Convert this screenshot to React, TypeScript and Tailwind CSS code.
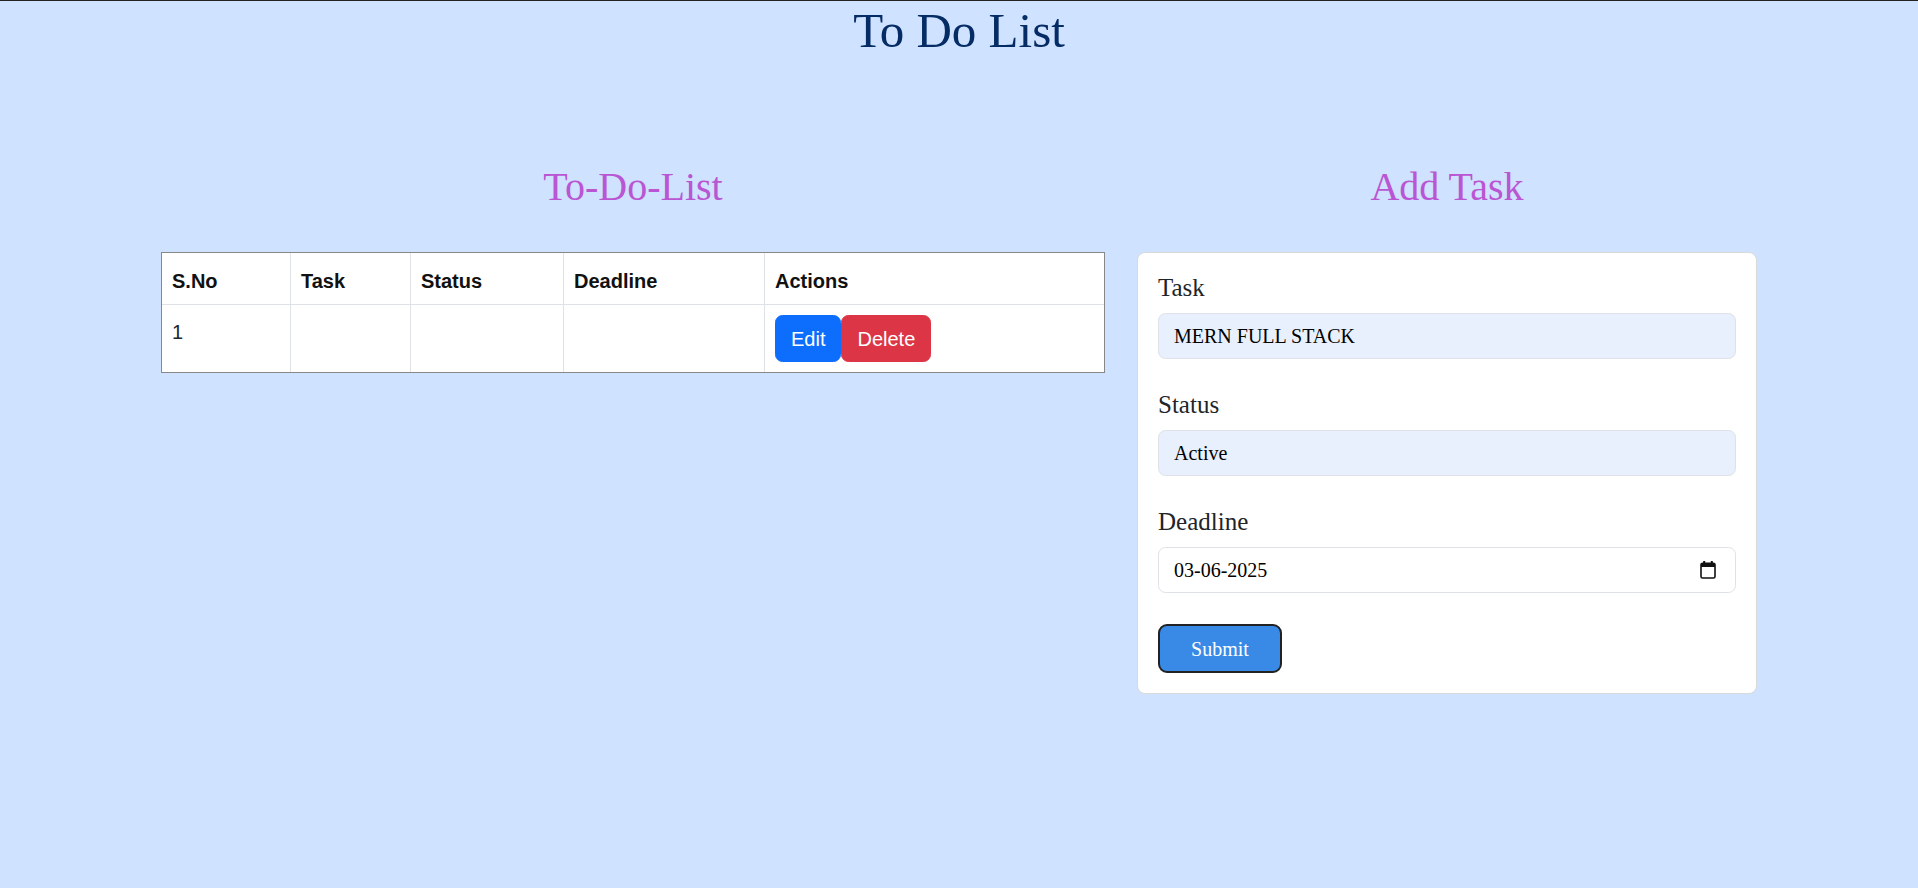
import React from "react";

const serif = "font-['Liberation_Serif','Times_New_Roman',serif]";
const sans = "font-['Liberation_Sans',Arial,sans-serif]";

function CalendarIcon() {
  return (
    <svg width="16" height="18" viewBox="0 0 16 18" fill="none">
      <rect x="3.2" y="0" width="2" height="3.5" fill="#111" />
      <rect x="10.8" y="0" width="2" height="3.5" fill="#111" />
      <rect x="1" y="2.2" width="14" height="14.8" rx="1.6" stroke="#111" strokeWidth="1.6" />
      <rect x="1" y="2.2" width="14" height="3.8" fill="#111" />
    </svg>
  );
}

function Field({
  label,
  value,
  autofill,
  date,
}: {
  label: string;
  value: string;
  autofill?: boolean;
  date?: boolean;
}) {
  return (
    <div className="mb-[31px]">
      <label className="mb-[11px] block text-[25px] leading-[29px] text-[#212529]">{label}</label>
      <div
        className={`flex h-[46px] items-center justify-between rounded-[7.5px] border border-[#dee2e6] px-[15px] text-[20px] text-black ${
          autofill ? "bg-[#e8f0fe]" : "bg-white"
        }`}
      >
        <span>{value}</span>
        {date && (
          <span className="mr-[4px] flex items-center">
            <CalendarIcon />
          </span>
        )}
      </div>
    </div>
  );
}

export default function App() {
  const cols = [
    { name: "S.No", w: "w-[129px]" },
    { name: "Task", w: "w-[120px]" },
    { name: "Status", w: "w-[153px]" },
    { name: "Deadline", w: "w-[201px]" },
    { name: "Actions", w: "w-[339px]" },
  ];

  return (
    <div className={`min-h-[888px] border-t border-[#222] bg-[#cfe2ff] ${serif}`}>
      <h1 className="text-center text-[49px] leading-[59px] text-[#052c65]">To Do List</h1>

      <div className="mx-auto mt-[103px] flex w-[1596px] gap-[32px]">
        <div className="w-[944px]">
          <h2 className="mb-[41px] text-center text-[40px] leading-[48px] text-[#ba55d3]">To-Do-List</h2>
          <table className={`w-[944px] table-fixed border-separate border-spacing-0 border border-[#888] bg-white ${sans}`}>
            <thead>
              <tr>
                {cols.map((c, i) => (
                  <th
                    key={c.name}
                    className={`${c.w} border-b border-[#dee2e6] px-[10px] pt-[13px] pb-[8px] text-left text-[20px] leading-[30px] font-bold text-[#111] ${
                      i < cols.length - 1 ? "border-r" : ""
                    }`}
                  >
                    {c.name}
                  </th>
                ))}
              </tr>
            </thead>
            <tbody>
              <tr>
                <td className="border-r border-[#dee2e6] px-[10px] pt-[12px] align-top text-[20px] leading-[30px] text-[#212529]">
                  1
                </td>
                <td className="border-r border-[#dee2e6]" />
                <td className="border-r border-[#dee2e6]" />
                <td className="border-r border-[#dee2e6]" />
                <td className="px-[10px] pt-[10px] pb-[10px] align-top">
                  <div className="flex">
                    <button className="rounded-[7.5px] border border-[#0d6efd] bg-[#0d6efd] px-[15px] py-[7.5px] text-[20px] leading-[30px] text-white">
                      Edit
                    </button>
                    <button className="rounded-[7.5px] border border-[#dc3545] bg-[#dc3545] px-[15px] py-[7.5px] text-[20px] leading-[30px] text-white">
                      Delete
                    </button>
                  </div>
                </td>
              </tr>
            </tbody>
          </table>
        </div>

        <div className="w-[620px]">
          <h2 className="mb-[41px] text-center text-[40px] leading-[48px] text-[#ba55d3]">Add Task</h2>
          <div className="rounded-[8px] border border-[#d9d9d9] bg-white px-[20px] pt-[20px] pb-[20px]">
            <Field label="Task" value="MERN FULL STACK" autofill />
            <Field label="Status" value="Active" autofill />
            <Field label="Deadline" value="03-06-2025" date />
            <button className="h-[49px] w-[124px] rounded-[9px] border-2 border-[#222] bg-[#398ae6] text-[20px] text-white">
              Submit
            </button>
          </div>
        </div>
      </div>
    </div>
  );
}
